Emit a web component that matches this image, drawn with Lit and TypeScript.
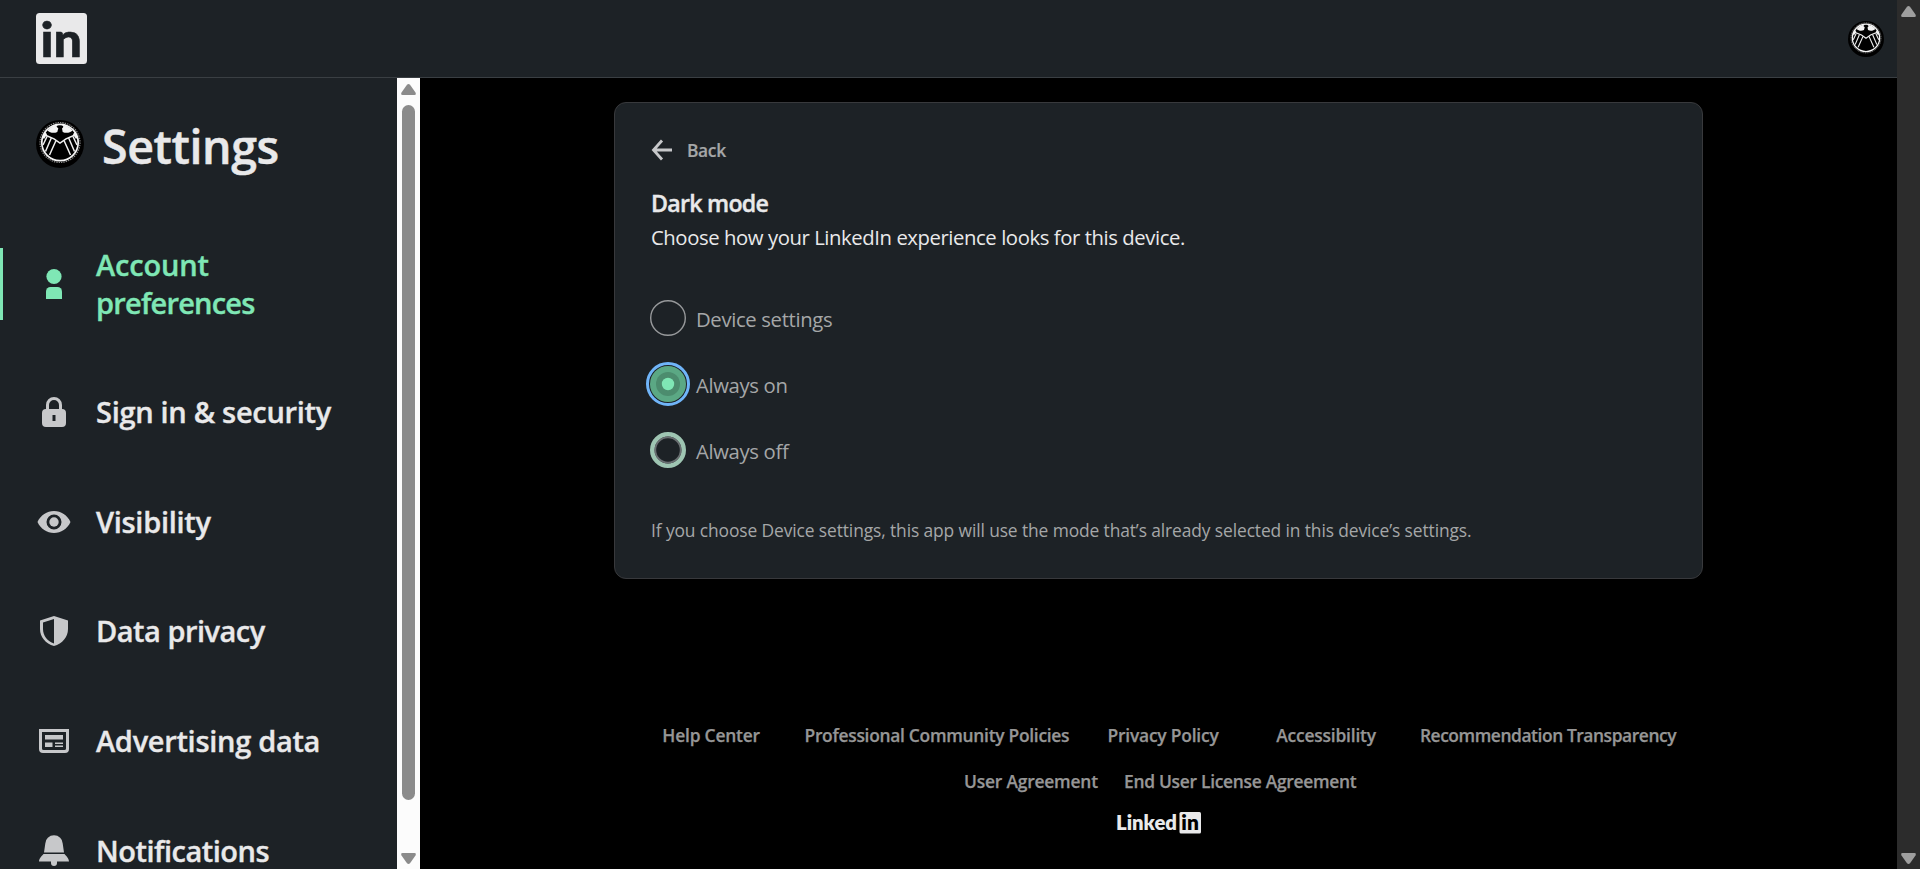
import { LitElement, html, svg, css } from "lit";
import { customElement, property } from "lit/decorators.js";

const navIcons = {
  person: svg`<circle cx="18" cy="10.500" r="7.600"/><path d="M10 33V25.500a4.500 4.500 0 0 1 4.500-4.500h7a4.500 4.500 0 0 1 4.500 4.500V33z"/>`,
  lock: svg`<path fill-rule="evenodd" d="M10 15V11a8 8 0 0 1 16 0v4a4 4 0 0 1 4 4v10a4 4 0 0 1-4 4H10a4 4 0 0 1-4-4V19a4 4 0 0 1 4-4zm3 0h10V11a5 5 0 0 0-10 0zm3.500 6v6h3v-6z"/>`,
  eye: svg`<path fill-rule="evenodd" d="M18 7C11 7 4.500 11.200 1.500 18C4.500 24.800 11 29 18 29S31.500 24.800 34.500 18C31.500 11.200 25 7 18 7zm0 18.500a7.500 7.500 0 1 1 0-15a7.500 7.500 0 0 1 0 15z"/><circle cx="18" cy="18" r="4.700"/>`,
  shield: svg`<path fill-rule="evenodd" d="M18 3L32 7.500V16C32 24 26.500 30.500 18 33C9.500 30.500 4 24 4 16V7.500zM18 6L7 9.600V16C7 22.500 11.500 28.500 18 30.500z"/>`,
  ads: svg`<path fill-rule="evenodd" d="M3 6H33V26a4 4 0 0 1-4 4H7a4 4 0 0 1-4-4zM6 9V25.500A1.500 1.500 0 0 0 7.500 27h21a1.500 1.500 0 0 0 1.500-1.500V9z"/><path d="M9 12h18v4.500H9zM9 19.500h7.500V24H9zM19 19.500h8V21h-8zM19 22.500h8V24h-8z"/>`,
  bell: svg`<path d="M8 19.500L9.300 10.500A8.700 8.200 0 0 1 26.700 10.500L28 19.500zM3 28.500C3 25.500 6 22.500 7.500 21H28.500C30 22.500 33 25.500 33 28.500H21V30a3 3 0 0 1-6 0V28.500z"/>`,
};

type IconName = keyof typeof navIcons;

@customElement("eagle-avatar")
class EagleAvatar extends LitElement {
  static styles = css`
    :host { display: block; }
    svg { display: block; width: 100%; height: 100%; }
  `;
  render() {
    return html`<svg viewBox="0 0 48 48" fill="none">
      <circle cx="24" cy="24" r="24" fill="#000"/>
      <circle cx="24" cy="22.500" r="20" stroke="#8a8a8a" stroke-width="1.200" stroke-dasharray="1.400 1"/>
      <circle cx="24" cy="22.500" r="18.200" fill="#000" stroke="#f6f6f6" stroke-width="1.700"/>
      <path fill="#f4f4f4" d="M11.500 10.500A17.500 17.500 0 0 1 23 4.600C21 5.500 20.500 6.300 20.800 7L22.300 8.200L21.300 12C18 13.500 14 13 11.500 10.500zM36.500 10.500A17.500 17.500 0 0 0 24.500 4.600C27 5.500 27.800 6.500 27 7.500L26 8.500L26.700 12C30 13.500 34 13 36.500 10.500z"/>
      <path fill="#f4f4f4" d="M6 17L9.500 12L11 14.500L8 19zM42 17L38.500 12L37 14.500L40 19z"/>
      <g stroke="#f0f0f0" stroke-width="1.500">
        <path d="M9 15L18 18.800L24 23L30 18.800L39 15"/>
        <path d="M11 16.500L7 25M15.300 18L9.500 31.500M20 20.500L13.500 35"/>
        <path d="M37 16.500L41 25M32.700 18L38.500 31.500M28 20.500L34.500 35"/>
      </g>
    </svg>`;
  }
}

@customElement("scroll-rail")
class ScrollRail extends LitElement {
  @property({ type: Boolean, reflect: true }) dark = false;
  static styles = css`
    :host { display: flex; flex-direction: column; align-items: center; justify-content: space-between;
      box-sizing: border-box; width: 23px; flex: none; padding: 6px 0 5px; background: #fcfcfc; color: #8b8b8b; }
    :host([dark]) { background: #2c2c2c; color: #9f9f9f; }
    svg { display: block; width: 15px; height: 12px; fill: currentColor; flex: none; }
    .thumb { width: 13px; height: 695px; border-radius: 7px; background: currentColor; margin-bottom: 43px; }
  `;
  render() {
    return html`
      <svg viewBox="0 0 15 12"><path d="M6 .8Q7.500-.8 9 .8L14.500 8.500Q15.500 11 13.500 11H1.500Q-.5 11 .5 8.500z"/></svg>
      ${this.dark ? null : html`<div class="thumb"></div>`}
      <svg viewBox="0 0 15 12"><path d="M6 11.200Q7.500 12.800 9 11.200L14.500 3.500Q15.500 1 13.500 1H1.500Q-.5 1 .5 3.500z"/></svg>`;
  }
}

@customElement("nav-entry")
class NavEntry extends LitElement {
  @property() icon: IconName = "person";
  @property({ type: Boolean, reflect: true }) active = false;
  static styles = css`
    :host { display: block; }
    a { display: flex; align-items: center; padding: 35.800px 0; color: #e9e9ea; }
    .row { display: flex; align-items: center; box-sizing: border-box; padding-left: 36px; }
    :host([active]) a { padding: 37.500px 0; color: #7fe7b5; }
    :host([active]) .row { height: 72px; padding-left: 33px; border-left: 3px solid #7fe7b5; }
    svg { width: 36px; height: 36px; fill: #c7c8ca; flex: none; }
    :host([active]) svg { fill: #7fe7b5; }
    .label { margin-left: 24px; font-size: 29px; line-height: 38px; font-weight: 600; white-space: nowrap;
      letter-spacing: -.15px; -webkit-text-stroke: .35px currentColor; }
  `;
  render() {
    return html`<a><span class="row"><svg viewBox="0 0 36 36">${navIcons[this.icon]}</svg>
      <span class="label"><slot></slot></span></span></a>`;
  }
}

@customElement("app-root")
class AppRoot extends LitElement {
  static styles = css`
    :host { display: flex; width: 100%; height: 869px; overflow: hidden; background: #000;
      font-family: "Open Sans", "Noto Sans", sans-serif; color: #e9e9ea; }
    .page { flex: 1; display: flex; flex-direction: column; min-width: 0; }
    header { display: flex; align-items: center; justify-content: space-between; box-sizing: border-box;
      height: 78px; flex: none; padding: 0 13px 0 36px; background: #1d2226; border-bottom: 1px solid #3a3f43; }
    .bug { width: 51px; height: 51px; overflow: visible; }
    .bug text { font-family: Lato, sans-serif; font-weight: 900; stroke: #1d2226; stroke-width: .6px; }
    .small { width: 36px; height: 36px; margin-top: 1px; }
    .body { flex: 1; display: flex; min-height: 0; }
    aside { width: 397px; flex: none; background: #1d2226; overflow: hidden; }
    .title { display: flex; align-items: flex-start; height: 90.500px; padding: 42px 0 0 36px; }
    .title eagle-avatar { width: 48px; height: 48px; flex: none; }
    h1 { margin: 0 0 0 18px; font-size: 46.500px; line-height: 53px; font-weight: 600; letter-spacing: -.4px; -webkit-text-stroke: .5px currentColor; }
    .t65 { letter-spacing: -.8px; } .t30 { letter-spacing: -.5px; }
    .t25 { letter-spacing: -.3px; } .t20 { letter-spacing: -.25px; }
    main { flex: 1; display: flex; flex-direction: column; align-items: center; padding-top: 24px; }
    .card { box-sizing: border-box; width: 1089px; height: 477px; padding: 35px 36px 0;
      background: #1d2226; border: 1px solid #38393c; border-radius: 12px; flex: none; }
    .back { display: flex; align-items: center; height: 24px; font-size: 17.400px; font-weight: 600; color: #a5a7a8; letter-spacing: -.35px; }
    .back svg { width: 24px; height: 24px; margin-right: 12px; margin-left: -1px; }
    .back span { -webkit-text-stroke: .2px currentColor; margin-left: 1px; }
    h2 { margin: 25px 0 0; font-size: 23.200px; line-height: 32px; font-weight: 600; letter-spacing: -.75px; -webkit-text-stroke: .4px currentColor; }
    .lead { margin: 2px 0 0; font-size: 20.300px; line-height: 32px; letter-spacing: -.42px; }
    .options { display: flex; flex-direction: column; gap: 30px; margin-top: 47px; margin-left: -1px; }
    .option { display: flex; align-items: center; gap: 10px; height: 36px; font-size: 20.300px; color: #a5a7a8; letter-spacing: -.35px; }
    .option span { padding-top: 1px; }
    .option svg { width: 36px; height: 36px; overflow: visible; }
    .note { margin: 50px 0 0; font-size: 17.400px; line-height: 24px; color: #a5a7a8; letter-spacing: -.11px; }
    footer { width: 1089px; padding-top: 144px; font-size: 17.400px; line-height: 24px; font-weight: 600; color: #969696; white-space: nowrap;
      -webkit-text-stroke: .25px currentColor; }
    .links { display: grid; grid-template-columns: 142.200px 303px 168.800px 143.600px auto; padding-left: 48.300px; letter-spacing: -.2px; }
    .links.second { grid-template-columns: 160px auto; padding-left: 350px; margin-top: 22px; }
    .l25 { letter-spacing: -.28px; } .l37 { letter-spacing: -.43px; }
    .brand { display: block; width: 86px; height: 26px; margin: 18px auto 0; overflow: visible; -webkit-text-stroke: 0; }
    .brand text { font-family: Lato, sans-serif; font-weight: 800; }
  `;

  private radio(id: string) {
    if (id === "on")
      return html`<svg viewBox="0 0 36 36"><circle cx="18" cy="18" r="20.500" fill="none" stroke="#70b5f9" stroke-width="3"/>
        <circle cx="18" cy="18" r="18" fill="#5ba884"/><circle cx="18" cy="18" r="12" fill="#4c8c6e"/><circle cx="18" cy="18" r="6.200" fill="#7fe7b5"/></svg>`;
    if (id === "off")
      return html`<svg viewBox="0 0 36 36" fill="none"><circle cx="18" cy="18" r="15.700" stroke="#9ec5b2" stroke-width="4.600"/>
        <circle cx="18" cy="18" r="12.700" stroke="#696e71" stroke-width="1.800"/></svg>`;
    return html`<svg viewBox="0 0 36 36" fill="none"><circle cx="18" cy="18" r="17.300" stroke="#97999b" stroke-width="1.400"/></svg>`;
  }

  private option(id: string, label: string) {
    return html`<label class="option">${this.radio(id)}<span>${label}</span></label>`;
  }

  render() {
    return html`
      <div class="page">
        <header>
          <svg class="bug" viewBox="0 0 51 51"><rect width="51" height="51" rx="3.500" fill="#e9e9ea"/>
            <text x="4.500" y="44" font-size="48" fill="#1d2226" textLength="41.500" lengthAdjust="spacingAndGlyphs">in</text></svg>
          <eagle-avatar class="small"></eagle-avatar>
        </header>
        <div class="body">
          <aside>
            <div class="title"><eagle-avatar></eagle-avatar><h1>Settings</h1></div>
            <nav>
              <nav-entry icon="person" active>Account<br><span class="t65">preferences</span></nav-entry>
              <nav-entry icon="lock"><span class="t25">Sign in &amp; security</span></nav-entry>
              <nav-entry icon="eye"><span class="t25">Visibility</span></nav-entry>
              <nav-entry icon="shield"><span class="t30">Data privacy</span></nav-entry>
              <nav-entry icon="ads"><span class="t25">Advertising data</span></nav-entry>
              <nav-entry icon="bell"><span class="t30">Notifications</span></nav-entry>
            </nav>
          </aside>
          <scroll-rail></scroll-rail>
          <main>
            <section class="card">
              <div class="back"><svg viewBox="0 0 24 24" fill="none" stroke="#c7c8ca" stroke-width="2.800"><path d="M22 12H4M12 2.500L3.500 12L12 21.500"/></svg><span>Back</span></div>
              <h2>Dark mode</h2>
              <p class="lead">Choose how your LinkedIn experience looks for this device.</p>
              <div class="options">
                ${this.option("device", "Device settings")}
                ${this.option("on", "Always on")}
                ${this.option("off", "Always off")}
              </div>
              <p class="note">If you choose Device settings, this app will use the mode that’s already selected in this device’s settings.</p>
            </section>
            <footer>
              <div class="links"><a>Help Center</a><a class="l25">Professional Community Policies</a><a>Privacy Policy</a><a>Accessibility</a><a class="l37">Recommendation Transparency</a></div>
              <div class="links second"><a>User Agreement</a><a class="l25">End User License Agreement</a></div>
              <svg class="brand" viewBox="0 0 86 26"><text x="0" y="19" font-size="21" fill="#e9e9ea" textLength="61" lengthAdjust="spacingAndGlyphs">Linked</text>
                <rect x="63.500" y="1" width="21.500" height="21.500" rx="1.500" fill="#e9e9ea"/>
                <text x="65.300" y="19.300" font-size="20" fill="#000" textLength="17.500" lengthAdjust="spacingAndGlyphs">in</text></svg>
            </footer>
          </main>
        </div>
      </div>
      <scroll-rail dark></scroll-rail>`;
  }
}
